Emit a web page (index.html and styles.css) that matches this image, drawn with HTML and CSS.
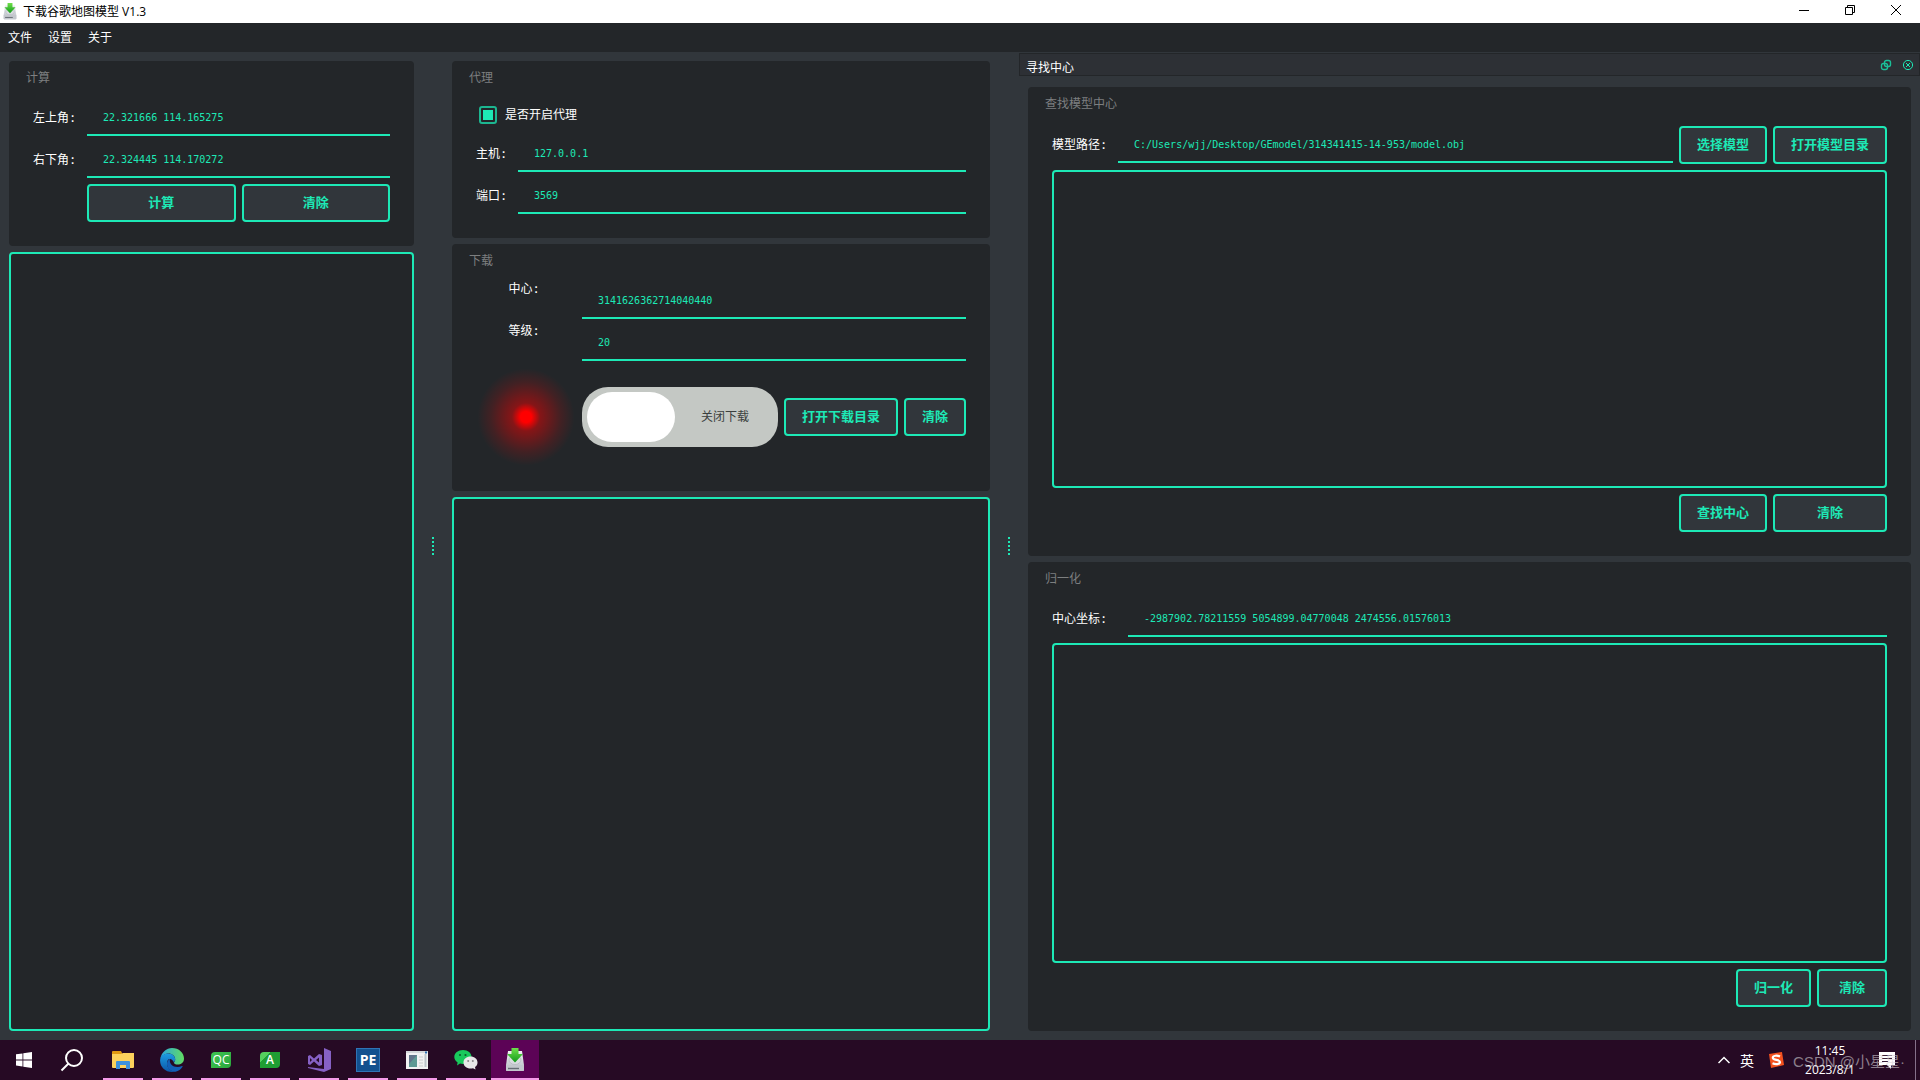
FILE: index.html
```html
<!DOCTYPE html>
<html lang="zh-CN">
<head>
<meta charset="utf-8">
<title>下载谷歌地图模型 V1.3</title>
<link rel="stylesheet" href="styles.css">
</head>
<body>
<svg class="defs" aria-hidden="true">
  <defs>
    <linearGradient id="arrow" x1="0" y1="0" x2="0" y2="1"><stop offset="0" stop-color="#6fe04a"/><stop offset="1" stop-color="#119a1b"/></linearGradient>
    <linearGradient id="drive" x1="0" y1="0" x2="0" y2="1"><stop offset="0" stop-color="#f1f2f4"/><stop offset="1" stop-color="#b4bac2"/></linearGradient>
    <linearGradient id="edgeTop" x1="0" y1="0" x2="1" y2="0"><stop offset="0" stop-color="#2aa5e0"/><stop offset="1" stop-color="#62dc62"/></linearGradient>
    <linearGradient id="edgeBody" x1="0" y1="0" x2="0" y2="1"><stop offset="0" stop-color="#1c9ce2"/><stop offset="1" stop-color="#0c56a8"/></linearGradient>
    <symbol id="app" viewBox="0 0 20 24">
      <path d="M3 3h14l2 14v5q0 1-1 1H2q-1 0-1-1v-5z" fill="url(#drive)"/>
      <path d="M1 17h18v5q0 1-1 1H2q-1 0-1-1z" fill="#c3c7cd"/>
      <ellipse cx="10" cy="12" rx="6" ry="4.500" fill="#d9dce0" stroke="#a9aeb5" stroke-width=".6"/>
      <path d="M3 20.500h11" stroke="#666d75" stroke-width="1.4"/>
      <path d="M6.500 0h7v6H18l-8 8.500L2 6h4.500z" fill="url(#arrow)"/>
    </symbol>
  </defs>
</svg>

<header class="titlebar">
  <svg class="titlebar-icon"><use href="#app"/></svg>
  <h1 class="titlebar-text">下载谷歌地图模型 V1.3</h1>
  <div class="window-controls">
    <button class="window-button" aria-label="最小化"><svg width="10" height="10"><path d="M0 5.5h10" stroke="#000"/></svg></button>
    <button class="window-button" aria-label="还原"><svg width="10" height="10" fill="none" stroke="#000"><path d="M.5 2.5h7v7h-7zM2.5 2.5v-2h7v7h-2"/></svg></button>
    <button class="window-button" aria-label="关闭"><svg width="10" height="10" stroke="#000"><path d="M0 0l10 10M10 0L0 10"/></svg></button>
  </div>
</header>

<nav class="menubar">
  <button class="menu-item">文件</button>
  <button class="menu-item">设置</button>
  <button class="menu-item">关于</button>
</nav>

<main class="workspace">
  <section class="column">
    <form class="card">
      <h2 class="card-title">计算</h2>
      <div class="form form-calc">
        <label for="top-left">左上角:</label>
        <input class="field" id="top-left" value="22.321666 114.165275">
        <label for="bottom-right">右下角:</label>
        <input class="field" id="bottom-right" value="22.324445 114.170272">
        <div class="button-pair">
          <button class="btn" type="button">计算</button>
          <button class="btn" type="button">清除</button>
        </div>
      </div>
    </form>
    <textarea class="output" aria-label="计算结果"></textarea>
  </section>

  <div class="splitter"><i></i><i></i><i></i><i></i><i></i></div>

  <section class="column">
    <form class="card">
      <h2 class="card-title">代理</h2>
      <div class="form form-proxy">
        <label class="check-row"><input class="check" type="checkbox" checked>是否开启代理</label>
        <label for="host">主机:</label>
        <input class="field" id="host" value="127.0.0.1">
        <label for="port">端口:</label>
        <input class="field" id="port" value="3569">
      </div>
    </form>
    <form class="card">
      <h2 class="card-title">下载</h2>
      <div class="form form-download">
        <label class="label-top" for="center">中心:</label>
        <input class="field" id="center" value="3141626362714040440">
        <label class="label-top" for="level">等级:</label>
        <input class="field" id="level" value="20">
        <div class="lamp"></div>
        <div class="download-row">
          <label class="toggle"><input class="toggle-input" type="checkbox"><span class="toggle-knob"></span><span class="toggle-text">关闭下载</span></label>
          <button class="btn btn-wide" type="button">打开下载目录</button>
          <button class="btn btn-clear" type="button">清除</button>
        </div>
      </div>
    </form>
    <textarea class="output" aria-label="下载日志"></textarea>
  </section>

  <div class="splitter splitter-dock"><i></i><i></i><i></i><i></i><i></i></div>

  <section class="dock">
    <header class="dock-header">
      <h2 class="dock-title">寻找中心</h2>
      <button class="dock-button" aria-label="浮动"><svg width="12" height="12" fill="none" stroke="#1bbf98"><rect x="4.5" y="1.5" width="6" height="6" rx="2" stroke-width="1.4"/><rect x="1.5" y="4.5" width="6" height="6" rx="2" stroke-width="1.4"/></svg></button>
      <button class="dock-button" aria-label="关闭"><svg width="12" height="12" fill="none" stroke="#1de9b6"><circle cx="6" cy="6" r="4.6"/><path d="M4 4l4 4M8 4L4 8"/></svg></button>
    </header>
    <div class="dock-body">
      <form class="card card-fill">
        <h2 class="card-title">查找模型中心</h2>
        <div class="form form-model">
          <div class="path-row">
            <label class="path-label" for="path">模型路径:</label>
            <input class="field" id="path" value="C:/Users/wjj/Desktop/GEmodel/314341415-14-953/model.obj">
          </div>
          <button class="btn" type="button">选择模型</button>
          <button class="btn" type="button">打开模型目录</button>
          <textarea class="output output-span" aria-label="模型中心"></textarea>
          <button class="btn btn-find" type="button">查找中心</button>
          <button class="btn" type="button">清除</button>
        </div>
      </form>
      <form class="card card-fill">
        <h2 class="card-title">归一化</h2>
        <div class="form form-normal">
          <label for="coords">中心坐标:</label>
          <input class="field" id="coords" value="-2987902.78211559 5054899.04770048 2474556.01576013">
          <textarea class="output output-span" aria-label="归一化结果"></textarea>
          <div class="actions">
            <button class="btn btn-normal" type="button">归一化</button>
            <button class="btn btn-clear-normal" type="button">清除</button>
          </div>
        </div>
      </form>
    </div>
  </section>
</main>

<footer class="taskbar">
  <button class="task task-system" aria-label="开始"><svg width="16" height="16" fill="#fff"><path d="M0 2.3l6.5-.9v6H0zM7.3 1.3L16 0v7.4H7.3zM0 8.4h6.5v6L0 13.6zM7.3 8.4H16V16l-8.7-1.3z"/></svg></button>
  <button class="task task-system" aria-label="搜索"><svg width="24" height="24" fill="none" stroke="#fff" stroke-width="2"><circle cx="14" cy="10" r="8"/><path d="M8.5 15.5L1.5 22.5"/></svg></button>
  <div class="task-list">
    <button class="task running" aria-label="文件资源管理器"><svg width="22" height="20"><path d="M0 2q0-1 1-1h8l1 2v4H0z" fill="#e09a12"/><path d="M0 4h9l2-1h11v14q0 1-1 1H1q-1 0-1-1z" fill="#fcd25c"/><path d="M4 19v-7q0-1 1-1h12q1 0 1 1v7h-4v-4H8v4z" fill="#3c92dc"/></svg></button>
    <button class="task running" aria-label="Edge"><svg width="24" height="24"><path d="M.3 11C1.500 4 6.500 0 12 0c7 0 12 5 12 10.500 0 4-3 6-6.500 6-2 0-3.500-.8-3.500-1.800 0-.8 1.200-1.200 1.200-3.200C15.200 8 12 5.500 8.500 5.500 4.500 5.500 1.500 8 .3 11z" fill="url(#edgeTop)"/><path d="M.1 12C.5 8 4 5.500 8 5.500c4.500 0 7.200 3 7.200 6 0 1.500-1.200 2.200-1.200 3.200-1-2.500-2.500-3.700-4-3.700-2 0-3 2-3 4.500 0 4 3.500 8 8.500 8.200-1 .2-2 .3-3.500.3C5 24-.3 18.500.1 12z" fill="url(#edgeBody)"/><path d="M10 11C8 12 7 13.500 7 16c0 4 4 8 8.500 7.700 3-.6 5.500-2.500 7-5 .3-.5 0-.8-.5-.6-1.500.7-3 .9-4.500.9-5 0-8.500-3.500-7.500-8z" fill="#1260b8"/></svg></button>
    <button class="task running" aria-label="Qt Creator"><span class="qt-icon">QC</span></button>
    <button class="task running" aria-label="Qt Assistant"><span class="qt-icon qt-assistant">A</span></button>
    <button class="task running" aria-label="Visual Studio"><svg width="24" height="24"><path d="M17 0l7 3v18l-7 3-16-4v-1l16 2z" fill="#8661c5"/><path d="M1 8v8l2 1 4-3.500 5 4.500 3-1V7l-3-1-5 4.500L3 7zm2 2l2 2-2 2zm9-.5v5L9 12z" fill="#8661c5" fill-rule="evenodd"/></svg></button>
    <button class="task running" aria-label="PE"><span class="pe-icon">PE</span></button>
    <button class="task running" aria-label="应用程序"><svg width="24" height="20"><path d="M1 1h22v18H1z" fill="#f2f2f2"/><path d="M1 1h22v2H1z" fill="#d4d8da"/><path d="M4 5h8v12H4z" fill="#5f9a94"/><path d="M4 5h8L4 14z" fill="#62758a"/><path d="M14 7h4M14 10h4M14 13h4M14 16h4" stroke="#ccc"/><path d="M19.500 4h2v13h-2z" fill="#bcc4c9"/><path d="M20 2.500h2" stroke="#2b6cb0" stroke-width="2"/></svg></button>
    <button class="task running" aria-label="微信"><svg width="24" height="22"><path d="M9 1c5 0 8.500 3 8.500 7s-3.500 7-8.500 7c-1 0-2-.1-3-.4L3 16.500l.6-3C1.500 12 .3 10 .3 8 .3 4 4 1 9 1z" fill="#18c95c"/><path d="M16.500 7.500c4 0 7 2.500 7 6 0 2-1 3.500-2.500 4.500l.5 2.500-2.500-1.300c-.8.200-1.600.3-2.500.3-4 0-7-2.500-7-6s3-6 7-6z" fill="#e8e8e8"/><g fill="#0c5c2b"><circle cx="6" cy="6" r="1.100"/><circle cx="11.500" cy="6" r="1.100"/></g><g fill="#888"><circle cx="14.200" cy="12" r="1"/><circle cx="18.800" cy="12" r="1"/></g></svg></button>
    <button class="task active" aria-label="下载谷歌地图模型"><svg width="20" height="24"><use href="#app"/></svg></button>
  </div>
  <div class="tray">
    <svg class="tray-chevron" width="12" height="8" fill="none" stroke="#fff" stroke-width="1.500"><path d="M0.500 7L6 1.500 11.500 7"/></svg>
    <span class="tray-lang">英</span>
    <svg class="tray-sogou" width="16" height="16"><path d="M1 2l13-2 2 13-13 3z" fill="#f4511e"/><path d="M12 4.500C9 3 4.800 3.500 4.800 5.800c0 2.700 7.200 1.500 7.200 4.200 0 2.300-4.500 2.700-7.500 1.300" fill="none" stroke="#fff" stroke-width="2.200"/></svg>
    <div class="clock"><span>11:45</span><span>2023/8/1</span></div>
    <svg class="tray-notice" width="16" height="17"><path d="M0 0h16v13h-4v4l-4-4H0z" fill="#fff"/><path d="M3 3.500h10M3 6.500h10M3 9.500h6" stroke="#3a2038"/></svg>
    <span class="show-desktop"></span>
    <span class="watermark">CSDN @小星星·</span>
  </div>
</footer>
</body>
</html>
```
FILE: styles.css
```css
:root {
  --accent: #1de9b6;
  --surface: #31363b;
  --card: #232629;
  --ui: "Noto Sans CJK SC", "Noto Sans", sans-serif;
  --mono: "DejaVu Sans Mono", "Noto Sans CJK SC", monospace;
}

* { box-sizing: border-box; }

body {
  margin: 0;
  min-height: 100vh;
  display: flex;
  flex-direction: column;
  background: var(--surface);
  color: #fff;
  font: 12px/16px var(--ui);
}

h1, h2 { margin: 0; font-size: 12px; font-weight: 400; }
button { border: 0; padding: 0; background: none; color: inherit; font: inherit; }
svg { display: block; }
.defs { position: absolute; width: 0; height: 0; }

/* Title bar and menu */
.titlebar { display: flex; align-items: center; height: 23px; padding: 0 1px 0 3px; background: #fff; color: #000; }
.titlebar-icon { width: 14px; height: 17px; margin-right: 6px; }
.titlebar-text { flex: 1; font-family: "Open Sans", "Noto Sans CJK SC", sans-serif; }
.window-controls { display: flex; align-self: flex-start; }
.window-button { display: grid; place-items: center; width: 46px; height: 20px; }
.menubar { display: flex; gap: 16px; height: 29px; padding: 0 8px 2px; background: var(--card); }

/* Workspace */
.workspace { flex: 1; display: grid; grid-template-columns: 405fr 38px 538fr 29px 901fr; padding-left: 9px; }
.column { display: flex; flex-direction: column; gap: 6px; min-width: 0; padding: 9px 0; }
.splitter { display: flex; flex-direction: column; align-items: center; justify-content: center; gap: 2px; }
.splitter i { width: 2px; height: 2px; background: var(--accent); }
.splitter-dock { padding-left: 9px; }

.card { display: flex; flex-direction: column; padding: 0 24px 24px; border-radius: 4px; background: var(--card); }
.card-title { height: 39px; margin-left: -7px; padding-top: 8px; color: #7d7f80; }
.form { display: grid; gap: 6px; align-items: center; flex: 1; }
.form-calc { grid-template-columns: 48px 1fr; }
.form-proxy { grid-template-columns: 36px 1fr; }
.form-download { grid-template-columns: 100px 1fr; }
.form label { font-family: var(--mono); white-space: nowrap; }

.field {
  width: 100%;
  min-width: 0;
  height: 36px;
  padding: 0 16px;
  border: 0;
  border-bottom: 2px solid var(--accent);
  border-radius: 0;
  outline: 0;
  background: transparent;
  color: var(--accent);
  font: 10px/16px var(--mono);
}

.btn {
  height: 38px;
  padding-bottom: 2px;
  border: 2px solid var(--accent);
  border-radius: 4px;
  background: var(--surface);
  color: var(--accent);
  font-size: 13px;
  font-weight: 700;
  white-space: nowrap;
}

.button-pair { grid-column: 2; display: grid; grid-template-columns: 1fr 1fr; gap: 6px; }

.output {
  display: block;
  flex: 1;
  width: 100%;
  min-height: 80px;
  padding: 12px;
  border: 2px solid var(--accent);
  border-radius: 4px;
  outline: 0;
  resize: none;
  background: var(--card);
  color: var(--accent);
  font: 10px/16px var(--mono);
}

.check-row { grid-column: 1 / -1; display: flex; align-items: center; gap: 8px; height: 30px; padding-left: 3px; }
.check { appearance: none; display: grid; place-items: center; width: 18px; height: 18px; margin: 0; border: 2px solid #1cb690; border-radius: 3px; }
.check:checked::before { content: ""; width: 10px; height: 10px; background: var(--accent); }

.label-top { align-self: start; padding-right: 4px; text-align: center; line-height: 12px; }
.lamp {
  height: 100px;
  background: radial-gradient(circle closest-side, #f00 0, #f00 11%, rgba(255, 0, 0, .45) 28%, rgba(255, 0, 0, .14) 70%, rgba(255, 0, 0, 0) 97%);
}
.download-row { display: flex; align-items: center; gap: 6px; }
.toggle { position: relative; flex: 1; display: flex; align-items: center; gap: 26px; height: 60px; padding: 5px; border-radius: 26px; background: #c4c8c4; color: #3b3f3e; }
.toggle-input { position: absolute; inset: 0; width: 100%; height: 100%; margin: 0; opacity: 0; }
.toggle-knob { width: 88px; height: 50px; border-radius: 25px; background: #fff; }
.btn-wide { width: 114px; }
.btn-clear { width: 62px; }

/* Dock */
.dock { display: flex; flex-direction: column; min-width: 0; padding: 1px 0 9px; }
.dock-header { display: flex; align-items: center; gap: 10px; height: 23px; padding: 0 5px 0 6px; border: 1px solid var(--card); background: #2d3035; }
.dock-title { flex: 1; padding-top: 4px; }
.dock-button { width: 12px; height: 12px; }
.dock-body { flex: 1; display: flex; flex-direction: column; gap: 6px; padding: 11px 9px 0; }
.card-fill { flex: 1; }
.form-model { grid-template: 38px 1fr 38px / 1fr 88px 114px; }
.form-normal { grid-template: 36px 1fr 38px / 70px 1fr; }
.path-row { display: grid; grid-template-columns: 60px 1fr; gap: 6px; align-items: center; }
.output-span { grid-column: 1 / -1; height: 100%; }
.btn-find { grid-column: 2; }
.actions { grid-column: 1 / -1; display: flex; justify-content: flex-end; gap: 6px; }
.btn-normal { width: 75px; }
.btn-clear-normal { width: 70px; }

/* Taskbar */
.taskbar { display: flex; height: 40px; background: #260a24; }
.task { display: grid; place-items: center; position: relative; width: 48px; height: 40px; }
.task-list { display: flex; gap: 1px; margin-left: 3px; }
.running::after, .active::after { content: ""; position: absolute; left: 4px; right: 4px; bottom: 0; height: 2px; background: #f49be8; }
.active { background: #5c0356; }
.active::after { left: 0; right: 0; }
.qt-icon { width: 20px; height: 16px; border-radius: 4px 0 4px 0; background: linear-gradient(135deg, #3fc452, #2aa83c); font: 12px/16px "Open Sans", sans-serif; }
.qt-assistant { background: linear-gradient(135deg, #55cf5e 0 30%, #1f9e33 30%); font-weight: 600; }
.pe-icon { width: 24px; height: 24px; border: 1px solid #2f74b5; background: #12518f; font: 700 14px/22px "Open Sans", sans-serif; }

.tray { position: relative; display: flex; align-items: center; margin-left: auto; padding-right: 4px; }
.tray-chevron { margin-right: 10px; }
.tray-lang { width: 14px; margin-right: 14px; font-size: 14px; }
.tray-sogou { margin-right: 18px; }
.clock { display: flex; flex-direction: column; gap: 3px; width: 56px; margin-right: 21px; text-align: center; font: 12px/16px "Open Sans", sans-serif; }
.tray-notice { margin-right: 20px; }
.show-desktop { width: 1px; height: 40px; background: #85708a; }
.watermark { position: absolute; right: 15px; top: 12px; color: rgba(210, 205, 210, .6); font: 15px/20px "Liberation Sans", "Noto Sans CJK SC", sans-serif; white-space: nowrap; }
```
